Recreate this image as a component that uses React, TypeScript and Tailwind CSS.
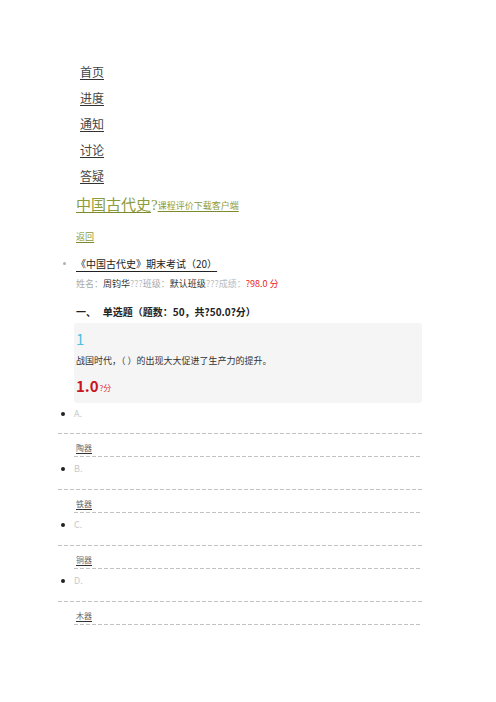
import React from "react";

const serif = { fontFamily: '"Liberation Serif", "Noto Sans CJK SC", serif' };

function Dash({ inset }: { inset?: boolean }) {
  return (
    <div
      className={`h-px bg-[linear-gradient(to_right,#c2c2c2_4px,transparent_4px)] bg-[length:6px_1px] bg-repeat-x ${inset ? "ml-[16px]" : ""}`}
    />
  );
}

function Option({ label, answer, first }: { label: string; answer: string; first?: boolean }) {
  return (
    <div>
      <div className={`${first ? "h-[30px]" : "h-[32px]"}`}>
        <div className={`flex items-center ${first ? "h-[22px]" : "h-[24px]"}`}>
          <span className="ml-[3px] w-[4px] h-[4px] rounded-full bg-[#222]" />
          <span className="ml-[9px] text-[9px] text-[#c8c8c8]">{label}</span>
        </div>
      </div>
      <Dash />
      <div className="h-[22px] pl-[18px] leading-[20px]">
        <span className="text-[8px] text-[#666] underline decoration-[#333] underline-offset-2">{answer}</span>
      </div>
      <Dash inset />
    </div>
  );
}

export default function App() {
  return (
    <div
      className="w-[496px] h-[702px] bg-white overflow-hidden"
      style={{ fontFamily: '"Noto Sans CJK SC", "Liberation Sans", sans-serif' }}
    >
      <div className="ml-[58px] w-[364px] pt-[60px]">
        {["首页", "进度", "通知", "讨论", "答疑"].map((t) => (
          <div key={t} className="h-[26px] flex items-center pl-[22px]">
            <span style={serif} className="text-[12px] text-[#444] underline decoration-[#333] underline-offset-2">
              {t}
            </span>
          </div>
        ))}
        <div className="h-[30px] flex items-center pl-[18px]" style={serif}>
          <span className="text-[15px] text-[#8d9c3a] underline decoration-[#7d8a2e] underline-offset-2">中国古代史</span>
          <span className="text-[15px] text-[#8d9c3a]">?</span>
          <span className="text-[9px] text-[#8d9c3a] underline decoration-[#7d8a2e] underline-offset-2 mt-[3px]">课程评价下载客户端</span>
        </div>
        <div className="h-[34px] flex items-center pl-[18px]">
          <span className="text-[9px] text-[#8d9c3a] underline decoration-[#7d8a2e] underline-offset-2">返回</span>
        </div>
        <div className="h-[18px] flex items-center">
          <span className="ml-[5px] w-[3px] h-[3px] rounded-full bg-[#b0b0b0]" />
          <span className="ml-[10px] text-[10px] text-[#222] underline decoration-[#222] underline-offset-[3px]">
            《中国古代史》期末考试（20）
          </span>
        </div>
        <div className="h-[24px] flex items-center pl-[18px] text-[9px]">
          <span className="text-[#aaa]">姓名：</span>
          <span className="text-[#333]">周钧华</span>
          <span className="text-[#bbb]">???</span>
          <span className="text-[#aaa]">班级：</span>
          <span className="text-[#333]">默认班级</span>
          <span className="text-[#bbb]">???成绩：</span>
          <span className="text-[#e61d1d]">?98.0 分</span>
        </div>
        <div className="h-[27px] pt-[5px] leading-[22px] pl-[18px] text-[10px] font-bold text-[#222]">
          一、&nbsp;&nbsp;&nbsp;单选题（题数：50，共?50.0?分）
        </div>
        <div className="ml-[16px] w-[348px] bg-[#f5f5f5] rounded-[3px] pt-[4px] pb-[2px] pl-[2px]">
          <div className="h-[24px] leading-[24px] text-[15px] text-[#4cc0dc]">1</div>
          <div className="h-[20px] leading-[20px] text-[9px] text-[#333]">战国时代，（ ）的出现大大促进了生产力的提升。</div>
          <div className="h-[30px] flex items-center">
            <span className="text-[15px] font-bold text-[#c8161d]">1.0</span>
            <span className="text-[8px] text-[#e0303a] mt-[4px] ml-px">?分</span>
          </div>
        </div>
        <Option first label="A." answer="陶器" />
        <Option label="B." answer="铁器" />
        <Option label="C." answer="铜器" />
        <Option label="D." answer="木器" />
      </div>
    </div>
  );
}
